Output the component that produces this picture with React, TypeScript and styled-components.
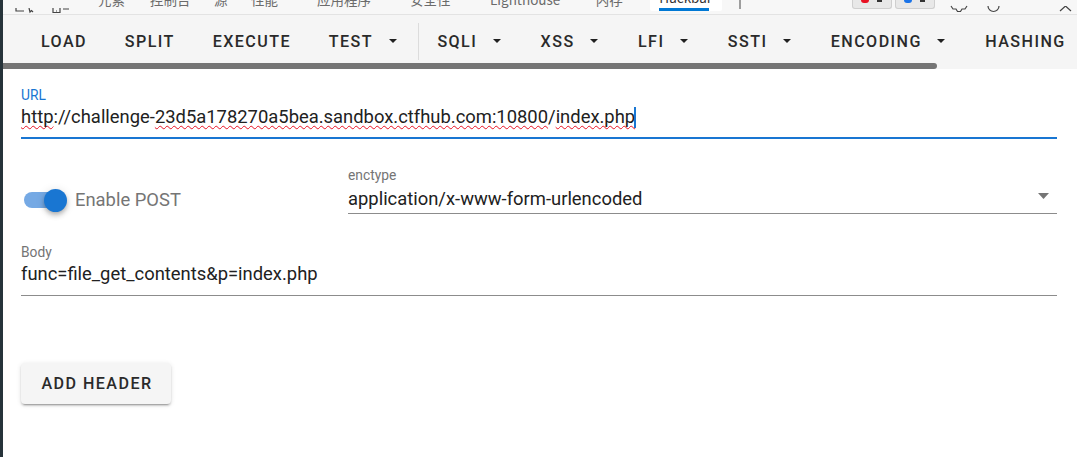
import React from "react";
import styled, { createGlobalStyle } from "styled-components";

const Global = createGlobalStyle`
  html, body { margin: 0; padding: 0; background: #fff; }
  body { font-family: Roboto, "Noto Sans CJK SC", sans-serif; overflow: hidden; }
  * { box-sizing: border-box; }
`;

const Page = styled.div`
  display: flex;
  width: 1077px;
  height: 457px;
  overflow: hidden;
`;

const DarkEdge = styled.div`
  width: 3px;
  flex: none;
  background: #26333a;
`;

const Main = styled.div`
  flex: 1;
  min-width: 0;
  display: flex;
  flex-direction: column;
  background: #fff;
`;

const TabStrip = styled.div`
  flex: none;
  height: 15px;
  display: flex;
  align-items: flex-end;
  background: #f7f7f7;
  border-bottom: 1px solid #e3e3e3;
  overflow: hidden;
  position: relative;
`;

const IconSlot = styled.div<{ $left: number; $width: number }>`
  flex: none;
  margin-left: ${(p) => p.$left}px;
  width: ${(p) => p.$width}px;
  height: 14px;
  display: flex;
  align-items: flex-end;
  svg { display: block; flex: none; }
`;

const DevTab = styled.div<{ $left: number }>`
  flex: none;
  margin-left: ${(p) => p.$left}px;
  height: 14px;
  font-family: "Noto Sans CJK SC", sans-serif;
  font-size: 13.5px;
  line-height: 14px;
  color: #6b6b6b;
  white-space: nowrap;
  display: flex;
  align-items: flex-end;
  position: relative;
  top: -8px;
`;

const ActiveTab = styled.div`
  flex: none;
  margin-left: 27px;
  width: 72px;
  height: 11px;
  align-self: flex-start;
  background: #fff;
  border-radius: 0 0 2px 2px;
  display: flex;
  justify-content: center;
  position: relative;
  overflow: hidden;
`;

const ActiveLabel = styled.div`
  font-family: "Noto Sans CJK SC", sans-serif;
  font-size: 13.5px;
  line-height: 14px;
  color: #333;
  position: absolute;
  top: -10px;
`;

const ActiveBar = styled.div`
  position: absolute;
  left: 9px;
  bottom: 0;
  width: 50px;
  height: 3px;
  background: #0078d4;
`;

const Badge = styled.div<{ $left: number }>`
  flex: none;
  margin-left: ${(p) => p.$left}px;
  width: 40px;
  height: 9px;
  align-self: flex-start;
  background: #e8e8e8;
  border: 1px solid #cfcfcf;
  border-top: none;
  border-radius: 0 0 3px 3px;
  display: flex;
  justify-content: center;
  gap: 8px;
`;

const BadgeDot = styled.span<{ $color: string }>`
  width: 8px;
  height: 3px;
  border-radius: 0 0 4px 4px;
  background: ${(p) => p.$color};
`;

const BadgeNum = styled.span`
  width: 5px;
  height: 2px;
  background: #333;
`;

const ToolbarWrap = styled.div`
  flex: none;
  background: #f5f5f5;
  height: 54px;
  display: flex;
  flex-direction: column;
`;

const Toolbar = styled.div`
  flex: none;
  height: 48px;
  padding: 4px 0 0 19.1px;
  display: flex;
  align-items: center;
  overflow: hidden;
`;

const ToolButton = styled.div`
  flex: none;
  display: flex;
  align-items: center;
  padding: 0 18.9px;
  font-size: 16.1px;
  font-weight: 500;
  letter-spacing: 1.44px;
  color: #2a2a2a;
  white-space: nowrap;
`;

const Caret = styled.svg`
  flex: none;
  width: 8px;
  height: 4px;
  margin-left: 15.6px;
  margin-right: 2px;
  fill: #212121;
`;

const Divider = styled.div`
  flex: none;
  width: 1px;
  height: 37px;
  background: #dcdcdc;
`;

const ScrollThumb = styled.div`
  flex: none;
  width: 934px;
  height: 6px;
  background: #757575;
  border-radius: 0 3px 3px 0;
`;

const Content = styled.div`
  flex: 1;
  padding: 18px 20px 0 18px;
  display: flex;
  flex-direction: column;
`;

const FieldLabel = styled.div<{ $color: string }>`
  font-size: 13.8px;
  line-height: 16px;
  color: ${(p) => p.$color};
`;

const FieldValue = styled.div`
  font-size: 18.4px;
  line-height: 28px;
  color: #212121;
  white-space: nowrap;
`;

const SelectValue = styled(FieldValue)`
  margin-top: 2px;
`;

const UrlField = styled.div`
  border-bottom: 2px solid #1976d2;
  height: 36px;
`;

const Squiggle = styled.span`
  text-decoration: underline wavy #e81123 1px;
  text-underline-offset: 2px;
  text-decoration-skip-ink: none;
`;

const TextCaret = styled.span`
  display: inline-block;
  width: 2px;
  height: 21px;
  margin-left: -1px;
  margin-right: -1px;
  vertical-align: -5px;
  background: #1976d2;
`;

const PostRow = styled.div`
  display: flex;
  align-items: flex-start;
  margin-top: 28px;
`;

const SwitchWrap = styled.div`
  flex: none;
  width: 327px;
  display: flex;
  align-items: center;
  padding: 19px 0 0 3px;
`;

const SwitchTrack = styled.div`
  width: 38px;
  height: 16px;
  border-radius: 8px;
  background: #75a9e4;
  position: relative;
  margin-right: 13px;
`;

const SwitchKnob = styled.div`
  position: absolute;
  right: -5px;
  top: -3.5px;
  width: 23px;
  height: 23px;
  border-radius: 50%;
  background: #1976d2;
  box-shadow: 0 2px 4px -1px rgba(0,0,0,.2), 0 4px 5px 0 rgba(0,0,0,.14), 0 1px 10px 0 rgba(0,0,0,.12);
`;

const SwitchLabel = styled.div`
  font-size: 18.4px;
  line-height: 28px;
  color: #757575;
`;

const SelectField = styled.div`
  flex: 1;
  height: 47px;
  border-bottom: 1px solid #8c8c8c;
  position: relative;
`;

const SelectCaret = styled.svg`
  position: absolute;
  right: 8px;
  top: 26px;
  width: 11px;
  height: 6px;
  fill: #757575;
`;

const BodyField = styled.div`
  height: 52px;
  margin-top: 30px;
  border-bottom: 1px solid #8c8c8c;
`;

const AddButton = styled.button`
  align-self: flex-start;
  margin-top: 67px;
  width: 150px;
  height: 41px;
  padding: 0 0 0 2px;
  border: none;
  border-radius: 4px;
  background: #f5f5f5;
  font-family: Roboto, sans-serif;
  font-size: 16.1px;
  font-weight: 500;
  letter-spacing: 1.44px;
  color: #2a2a2a;
  box-shadow: 0 3px 1px -2px rgba(0,0,0,.2), 0 2px 2px 0 rgba(0,0,0,.14), 0 1px 5px 0 rgba(0,0,0,.12);
`;

const menu: { label: string; caret?: boolean }[] = [
  { label: "SQLI", caret: true },
  { label: "XSS", caret: true },
  { label: "LFI", caret: true },
  { label: "SSTI", caret: true },
  { label: "ENCODING", caret: true },
  { label: "HASHING" },
];

const DownCaret = () => (
  <Caret viewBox="0 0 8 4"><path d="M0 0h8L4 4z" /></Caret>
);

export default function App() {
  return (
    <>
      <Global />
      <Page>
        <DarkEdge />
        <Main>
          <TabStrip>
            <IconSlot $left={12} $width={19}>
              <svg width="19" height="6" viewBox="0 0 19 6" fill="none" stroke="#444" strokeWidth="1.2">
                <path d="M1 0v3h8M14 0l1 4 1.5-1.5L18 4" />
              </svg>
            </IconSlot>
            <IconSlot $left={18} $width={18}>
              <svg width="18" height="6" viewBox="0 0 18 6" fill="none" stroke="#444" strokeWidth="1.2">
                <path d="M1 0v4.5h7V0M4 3h1M11 1h6" />
              </svg>
            </IconSlot>
            <DevTab $left={28}>元素</DevTab>
            <DevTab $left={25}>控制台</DevTab>
            <DevTab $left={23.5}>源</DevTab>
            <DevTab $left={23.5}>性能</DevTab>
            <DevTab $left={39}>应用程序</DevTab>
            <DevTab $left={39}>安全性</DevTab>
            <DevTab $left={39.5}>Lighthouse</DevTab>
            <DevTab $left={35.4}>内存</DevTab>
            <ActiveTab>
              <ActiveLabel>Hackbar</ActiveLabel>
              <ActiveBar />
            </ActiveTab>
            <IconSlot $left={17} $width={2}>
              <svg width="2" height="10" viewBox="0 0 2 10" style={{ marginBottom: 5 }}>
                <path d="M1 0v10" stroke="#444" strokeWidth="1" />
              </svg>
            </IconSlot>
            <Badge $left={111}><BadgeDot $color="#e81123" /><BadgeNum /></Badge>
            <Badge $left={3}><BadgeDot $color="#1a73e8" /><BadgeNum /></Badge>
            <IconSlot $left={15} $width={18}>
              <svg width="18" height="8" viewBox="0 0 18 8" fill="none" stroke="#444" strokeWidth="1.2" style={{ marginBottom: 1 }}>
                <path d="M1 1l2 3 3 0 1.5 2.5h3L12 4l3 0 2-3" />
              </svg>
            </IconSlot>
            <IconSlot $left={19} $width={13}>
              <svg width="13" height="8" viewBox="0 0 13 8" fill="none" stroke="#444" strokeWidth="1.2" style={{ marginBottom: 1 }}>
                <path d="M1 1a5.5 5.5 0 0 0 11 0" />
              </svg>
            </IconSlot>
            <IconSlot $left={59} $width={13}>
              <svg width="13" height="6" viewBox="0 0 13 6" fill="none" stroke="#444" strokeWidth="1.2" style={{ marginBottom: 2 }}>
                <path d="M1 5l5.5-5 5.5 5" />
              </svg>
            </IconSlot>
          </TabStrip>
          <ToolbarWrap>
            <Toolbar>
              <ToolButton>LOAD</ToolButton>
              <ToolButton>SPLIT</ToolButton>
              <ToolButton>EXECUTE</ToolButton>
              <ToolButton>TEST<DownCaret /></ToolButton>
              <Divider />
              {menu.map((m) => (
                <ToolButton key={m.label}>
                  {m.label}
                  {m.caret && <DownCaret />}
                </ToolButton>
              ))}
            </Toolbar>
            <ScrollThumb />
          </ToolbarWrap>
          <Content>
            <FieldLabel $color="#1976d2">URL</FieldLabel>
            <UrlField>
              <FieldValue>
                <Squiggle>http</Squiggle>://challenge-<Squiggle>23d5a178270a5bea.sandbox.ctfhub.com:10800</Squiggle>/<Squiggle>index.php</Squiggle><TextCaret />
              </FieldValue>
            </UrlField>
            <PostRow>
              <SwitchWrap>
                <SwitchTrack><SwitchKnob /></SwitchTrack>
                <SwitchLabel>Enable POST</SwitchLabel>
              </SwitchWrap>
              <SelectField>
                <FieldLabel $color="#757575">enctype</FieldLabel>
                <SelectValue>application/x-www-form-urlencoded</SelectValue>
                <SelectCaret viewBox="0 0 11 6"><path d="M0 0h11L5.5 6z" /></SelectCaret>
              </SelectField>
            </PostRow>
            <BodyField>
              <FieldLabel $color="#757575">Body</FieldLabel>
              <FieldValue>func=file_get_contents&amp;p=index.php</FieldValue>
            </BodyField>
            <AddButton>ADD HEADER</AddButton>
          </Content>
        </Main>
      </Page>
    </>
  );
}
